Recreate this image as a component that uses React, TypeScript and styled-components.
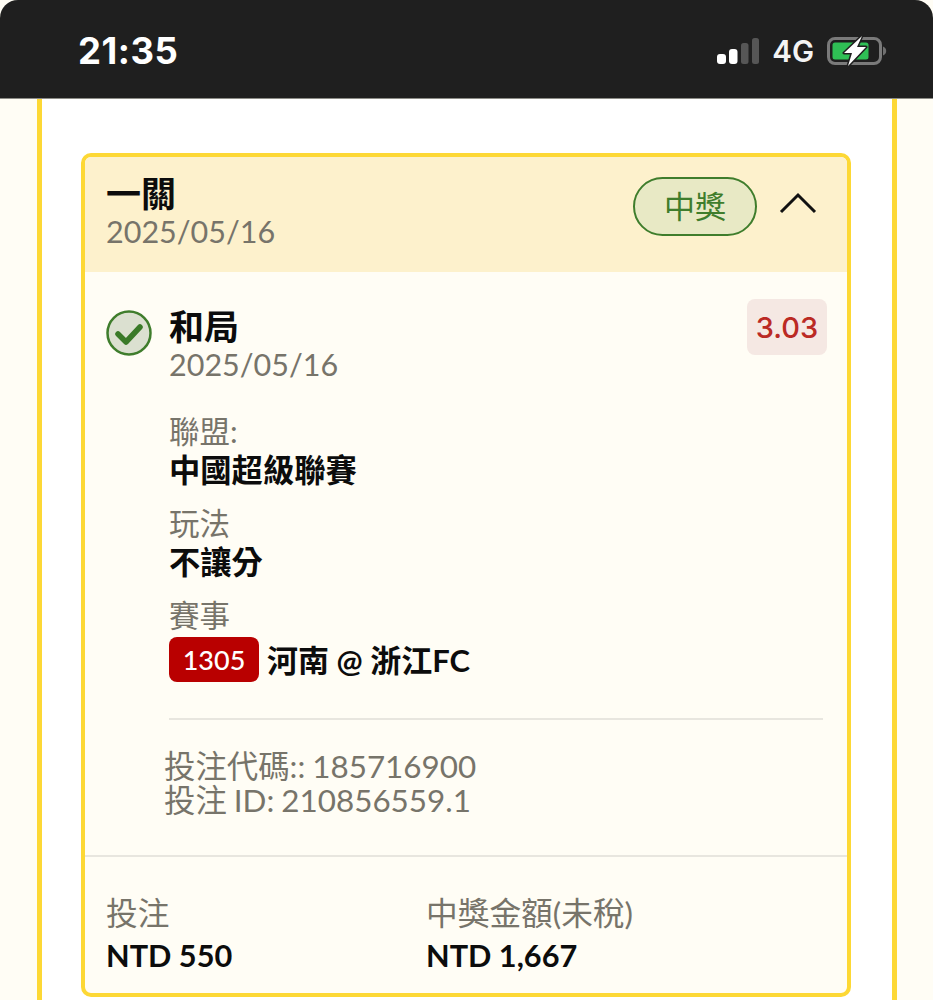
import React from "react";
import styled, { createGlobalStyle } from "styled-components";

const GlobalStyle = createGlobalStyle`
  html, body {
    margin: 0;
    padding: 0;
    background: #fffdf5;
  }
  body {
    font-family: Lato, "Noto Sans CJK TC", sans-serif;
  }
  * { box-sizing: border-box; }
`;

const Screen = styled.div`
  width: 933px;
  height: 1000px;
  overflow: hidden;
  background: #fffdf5;
`;

const StatusBar = styled.div`
  height: 99px;
  background: #1f1f1f;
  border-top-left-radius: 18px;
  border-top-right-radius: 18px;
  border-bottom: 1px solid #8c8c86;
  display: flex;
  align-items: center;
  justify-content: space-between;
  padding: 4px 46px 0 78px;
`;

const Clock = styled.div`
  font-family: Inter, sans-serif;
  font-weight: 700;
  font-size: 36.500px;
  letter-spacing: 0.5px;
  color: #fff;
`;

const StatusIcons = styled.div`
  display: flex;
  align-items: center;
  gap: 13px;
`;

const Network = styled.div`
  font-family: Inter, sans-serif;
  font-weight: 600;
  font-size: 29.500px;
  color: #f4f4f4;
`;

const Panel = styled.div`
  margin: 0 36px 0 37px;
  height: 901px;
  background: #fff;
  border-left: 5px solid #fdd835;
  border-right: 5px solid #fdd835;
  padding: 54px 41px 0 39px;
`;

const Card = styled.div`
  height: 844px;
  border: 4px solid #fdd835;
  border-radius: 10px;
  background: #fffdf5;
  overflow: hidden;
`;

const CardHeader = styled.div`
  height: 115px;
  background: #fdf1cc;
  display: flex;
  justify-content: space-between;
  padding: 17px 29px 0 21px;
`;

const HeaderTitle = styled.div`
  font-size: 35px;
  font-weight: 700;
  line-height: 38px;
  color: #0c0c0c;
`;

const DateText = styled.div`
  font-size: 30.500px;
  line-height: 37px;
  color: #77746a;
`;

const HeaderDate = styled(DateText)`
  margin-top: 1px;
`;

const HeaderRight = styled.div`
  display: flex;
  align-items: flex-start;
  gap: 21px;
  margin-top: 3px;
`;

const WinPill = styled.div`
  width: 124px;
  height: 59px;
  border: 2px solid #3f7d2c;
  border-radius: 29.500px;
  background: #e8e9c5;
  color: #3f7d2c;
  font-size: 31px;
  line-height: 55px;
  text-align: center;
`;

const Chevron = styled.svg`
  width: 40px;
  height: 24px;
  margin-top: 14px;
`;

const Selection = styled.div`
  display: flex;
  padding: 27px 20px 0 21px;
  height: 446px;
`;

const CheckWrap = styled.svg`
  width: 46px;
  height: 46px;
  flex-shrink: 0;
  margin-top: 11px;
`;

const SelectionBody = styled.div`
  flex: 1;
  margin-left: 17px;
  display: flex;
  flex-direction: column;
`;

const SelectionTop = styled.div`
  display: flex;
  justify-content: space-between;
  align-items: flex-start;
`;

const SelectionName = styled.div`
  font-size: 35px;
  font-weight: 700;
  line-height: 38px;
  margin-top: 8px;
  color: #0c0c0c;
`;

const Odds = styled.div`
  width: 80px;
  height: 56px;
  border-radius: 8px;
  background: #f5e8e3;
  color: #bb2a24;
  font-family: Inter, sans-serif;
  font-size: 29px;
  font-weight: 500;
  line-height: 58px;
  text-align: center;
`;

const SelectionDate = styled(DateText)`
  margin-top: -9px;
`;

const Field = styled.div`
  margin-top: ${(p: { $first?: boolean }) => (p.$first ? "29px" : "14px")};
`;

const FieldLabel = styled.div`
  font-size: 30.500px;
  line-height: 39px;
  color: #77746a;
`;

const FieldValue = styled.div`
  display: flex;
  align-items: center;
  font-size: 31.300px;
  font-weight: 700;
  line-height: 39px;
  color: #0c0c0c;
`;

const MatchCode = styled.span`
  width: 90px;
  height: 45px;
  margin: 2px 8px 0 0;
  border-radius: 8px;
  background: #b90000;
  color: #fff;
  font-size: 27px;
  font-weight: 500;
  line-height: 45px;
  text-align: center;
`;

const MatchName = styled.span`
  font-size: 31px;
  margin-top: 4px;
`;

const Rule = styled.div`
  height: 2px;
  background: #e8e6df;
`;

const InnerRule = styled(Rule)`
  margin: 0 24px 0 84px;
`;

const Refs = styled.div`
  padding: 29px 0 0 79px;
  height: 135px;
  font-size: 31.400px;
  line-height: 34px;
  word-spacing: -1px;
  color: #77746a;
`;

const Totals = styled.div`
  display: grid;
  grid-template-columns: 320px 1fr;
  padding: 36px 0 0 21px;
`;

const TotalLabel = styled.div`
  font-size: 31.700px;
  line-height: 40px;
  color: #77746a;
`;

const TotalValue = styled.div`
  font-size: 30.700px;
  font-weight: 700;
  line-height: 40px;
  margin-top: 3px;
  color: #0c0c0c;
`;

const SignalIcon = () => (
  <svg width="42" height="27" viewBox="0 0 42 27">
    <rect x="0" y="16" width="9" height="10" rx="3" fill="#fff" />
    <rect x="12" y="11" width="8.500" height="15" rx="3" fill="#fff" />
    <rect x="24" y="5" width="7.500" height="21" rx="2.500" fill="#565656" />
    <rect x="35" y="0" width="7" height="26" rx="2.500" fill="#565656" />
  </svg>
);

const BatteryIcon = () => (
  <svg width="60" height="32" viewBox="0 0 60 32">
    <rect x="1.500" y="3.500" width="52" height="25" rx="6.500" fill="none" stroke="#7a7a7a" strokeWidth="3" />
    <rect x="5.500" y="7.500" width="36" height="17" rx="2.500" fill="#2fbf55" />
    <path d="M56 11.500c2 .6 3.200 2.400 3.200 4.500s-1.200 3.900-3.200 4.500z" fill="#6f6f6f" />
    <path d="M35 1 17 18h8L21 31 39 12h-9z" fill="#fff" stroke="#1f1f1f" strokeWidth="3" strokeLinejoin="round" paintOrder="stroke" />
  </svg>
);

const App = () => {
  return (
    <Screen>
      <GlobalStyle />
      <StatusBar>
        <Clock>21:35</Clock>
        <StatusIcons>
          <SignalIcon />
          <Network>4G</Network>
          <BatteryIcon />
        </StatusIcons>
      </StatusBar>
      <Panel>
        <Card>
          <CardHeader>
            <div>
              <HeaderTitle>一關</HeaderTitle>
              <HeaderDate>2025/05/16</HeaderDate>
            </div>
            <HeaderRight>
              <WinPill>中獎</WinPill>
              <Chevron viewBox="0 0 40 24">
                <path d="M3 21 20 4l17 17" fill="none" stroke="#111" strokeWidth="3" />
              </Chevron>
            </HeaderRight>
          </CardHeader>
          <Selection>
            <CheckWrap viewBox="0 0 46 46">
              <circle cx="23" cy="23" r="21.500" fill="#dbe0d0" stroke="#3f7d2c" strokeWidth="2.500" />
              <path d="M12 24l8 8 14-15" fill="none" stroke="#3a7a28" strokeWidth="5.500" strokeLinecap="round" strokeLinejoin="round" />
            </CheckWrap>
            <SelectionBody>
              <SelectionTop>
                <SelectionName>和局</SelectionName>
                <Odds>3.03</Odds>
              </SelectionTop>
              <SelectionDate>2025/05/16</SelectionDate>
              <Field $first>
                <FieldLabel>聯盟:</FieldLabel>
                <FieldValue>中國超級聯賽</FieldValue>
              </Field>
              <Field>
                <FieldLabel>玩法</FieldLabel>
                <FieldValue>不讓分</FieldValue>
              </Field>
              <Field>
                <FieldLabel>賽事</FieldLabel>
                <FieldValue>
                  <MatchCode>1305</MatchCode>
                  <MatchName>河南 @ 浙江FC</MatchName>
                </FieldValue>
              </Field>
            </SelectionBody>
          </Selection>
          <InnerRule />
          <Refs>
            <div>投注代碼:: 185716900</div>
            <div>投注 ID: 210856559.1</div>
          </Refs>
          <Rule />
          <Totals>
            <div>
              <TotalLabel>投注</TotalLabel>
              <TotalValue>NTD 550</TotalValue>
            </div>
            <div>
              <TotalLabel>中獎金額(未稅)</TotalLabel>
              <TotalValue>NTD 1,667</TotalValue>
            </div>
          </Totals>
        </Card>
      </Panel>
    </Screen>
  );
};

export default App;
